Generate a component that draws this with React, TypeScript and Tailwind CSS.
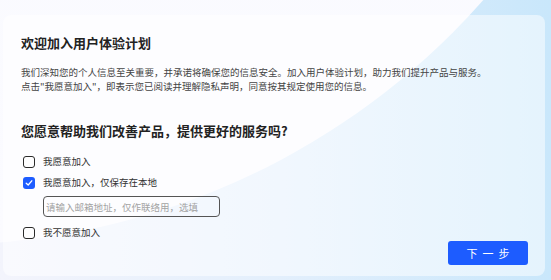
import React from 'react';

const font = { fontFamily: '"Noto Sans CJK SC", "Noto Sans", sans-serif' };

const Box: React.FC<{ checked?: boolean }> = ({ checked }) =>
    checked ? (
        <span className="w-[12px] h-[12px] rounded-[3px] bg-[#1d5cff] flex items-center justify-center shrink-0">
            <svg width="8" height="8" viewBox="0 0 8 8" fill="none">
                <path d="M1.2 4.2 L3.2 6 L6.8 1.8" stroke="white" strokeWidth="1.3" strokeLinecap="round" strokeLinejoin="round" />
            </svg>
        </span>
    ) : (
        <span className="w-[12px] h-[12px] rounded-[3px] border-[1.5px] border-[#2a2a2a] bg-white/40 shrink-0"></span>
    );

const Option: React.FC<{ label: string; checked?: boolean }> = ({ label, checked }) => (
    <label className="flex items-center gap-[8px] h-[14px] text-[9.5px] text-[#333] leading-none">
        <Box checked={checked} />
        <span>{label}</span>
    </label>
);

export default function App() {
    return (
        <div style={font} className="w-[551px] h-[280px] relative overflow-hidden bg-gradient-to-r from-[#f3f4fc] via-[#e3effc] to-[#c9e7fb]">
            {/* big soft arc */}
            <div className="absolute left-[-785px] top-[-1205px] w-[1450px] h-[1450px] rounded-full bg-gradient-to-b from-[#f6f8fe] to-[#fbfbff]"></div>

            <div className="relative ml-[3px] mt-[15px] w-[542px] h-[261px] rounded-[8px] bg-white/50 flex flex-col pl-[18px] pt-[19px]">
                <h1 className="text-[13px] leading-[18px] font-semibold text-[#222]">欢迎加入用户体验计划</h1>

                <div className="mt-[13px] text-[9.5px] leading-[14px] text-[#444] whitespace-nowrap">
                    <div>我们深知您的个人信息至关重要，并承诺将确保您的信息安全。加入用户体验计划，助力我们提升产品与服务。</div>
                    <div>点击"我愿意加入"，即表示您已阅读并理解隐私声明，同意按其规定使用您的信息。</div>
                </div>

                <h2 className="mt-[29px] text-[13px] leading-[18px] font-semibold text-[#222]">您愿意帮助我们改善产品，提供更好的服务吗?</h2>

                <div className="mt-[15px] pl-[2px] flex flex-col">
                    <Option label="我愿意加入" />
                    <div className="mt-[7px]">
                        <Option label="我愿意加入，仅保存在本地" checked />
                    </div>
                    <input
                        className="mt-[6px] ml-[20px] w-[177px] h-[21px] rounded-[4px] border border-[#555] bg-transparent px-[2px] text-[9.5px] text-[#333] placeholder:text-[#a3a3a3] outline-none"
                        placeholder="请输入邮箱地址，仅作联络用，选填"
                    />
                    <div className="mt-[9px]">
                        <Option label="我不愿意加入" />
                    </div>
                </div>

                <button className="mt-auto mb-[11px] mr-[17px] self-end w-[80px] h-[24px] rounded-[3px] bg-[#1d5cff] text-white text-[11px] leading-none tracking-[5px] pl-[5px]">
                    下一步
                </button>
            </div>
        </div>
    );
}
